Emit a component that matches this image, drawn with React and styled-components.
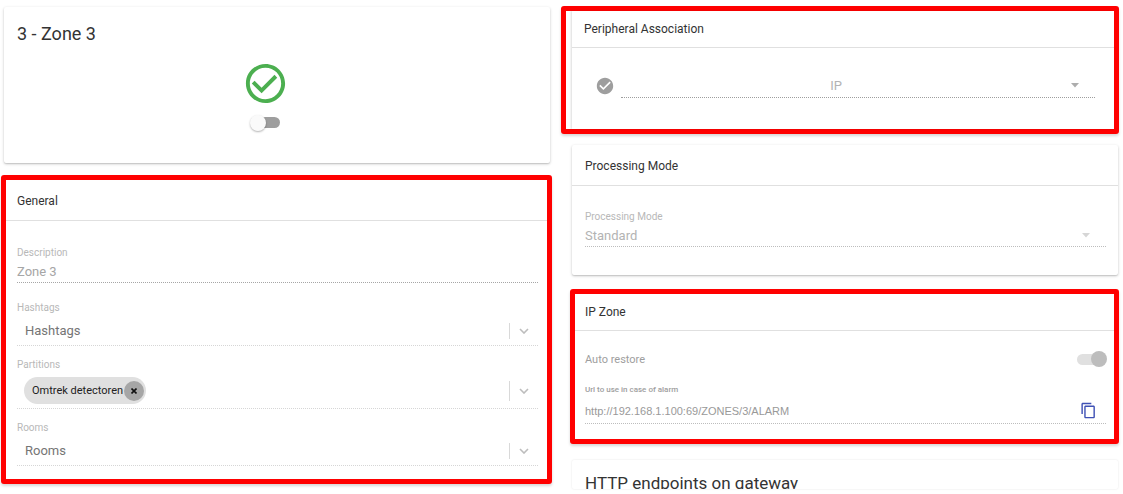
import React, { useState } from "react";
import styled, { createGlobalStyle } from "styled-components";

const GlobalStyle = createGlobalStyle`
  * {
    box-sizing: border-box;
  }
  body {
    margin: 0;
    background: #fff;
    color: #333;
    font-family: Roboto, "Liberation Sans", sans-serif;
    font-size: 13px;
  }
  button, input, select {
    font-family: inherit;
    margin: 0;
  }
`;

const StyledPage = styled.main`
  display: grid;
  grid-template-columns: minmax(0, 551fr) minmax(0, 558fr);
  column-gap: 9px;
  height: 100vh;
  padding: 6px 4px 5px 1px;
  overflow: hidden;
`;

const StyledColumn = styled.div`
  display: flex;
  flex-direction: column;
  min-height: 0;
`;

const StyledCard = styled.section`
  flex: none;
  background: #fff;
  border-radius: 2px;
  box-shadow: 0 1px 3px rgba(0, 0, 0, 0.22), 0 1px 1px rgba(0, 0, 0, 0.08);
`;

const StyledZoneCard = styled(StyledCard)`
  margin: 1px 2px 12px 3px;
  padding: 16px 36px 35px 13px;
`;

const StyledProcessingCard = styled(StyledCard)`
  margin: 11px 1px 14px 11px;
`;

const StyledEndpointsCard = styled(StyledCard)`
  flex: 1;
  min-height: 0;
  margin: 16px 1px 0 11px;
  padding: 12px 13px 0;
  overflow: hidden;
  box-shadow: 0 0 2px rgba(0, 0, 0, 0.12);
`;

const StyledFrame = styled.section`
  flex: none;
  margin-left: ${({ $indent }) => $indent || 0}px;
  border: 5px solid #f00;
  border-radius: 3px;
  background: #fff;
  box-shadow: 0 2px 3px rgba(0, 0, 0, 0.16);
`;

const StyledInset = styled.div`
  margin-left: 6px;
  box-shadow: -1px 0 2px rgba(0, 0, 0, 0.14);
`;

const StyledTitle = styled.h1`
  margin: 0;
  color: #333;
  font-size: ${({ $small }) => ($small ? 17 : 18)}px;
  font-weight: 400;
  line-height: 22px;
`;

const StyledHeader = styled.h2`
  display: flex;
  align-items: center;
  height: ${({ $compact }) => ($compact ? 37 : 41)}px;
  margin: 0;
  padding: ${({ $compact }) => ($compact ? 0 : 2)}px ${({ $pad }) => $pad}px 0;
  border-bottom: 1px solid #e0e0e0;
  color: #333;
  font-size: 12px;
  font-weight: 400;
`;

const StyledZoneStatus = styled.div`
  display: flex;
  flex-direction: column;
  align-items: center;
  gap: 10px;
  margin-top: 15px;
`;

const StyledGeneralBody = styled.div`
  display: flex;
  flex-direction: column;
  gap: 13px;
  padding: 26px 9px 13px 11px;
`;

const StyledField = styled.div`
  margin-bottom: ${({ $spaced }) => ($spaced ? 6 : 0)}px;
`;

const StyledLabel = styled.label`
  display: block;
  color: #b8b8b8;
  font-size: 10px;
  line-height: 12px;
`;

const StyledUrlLabel = styled(StyledLabel)`
  color: #9e9e9e;
  font-size: 8px;
  font-weight: 500;
`;

const StyledControl = styled.div`
  display: flex;
  align-items: center;
  height: ${({ $height }) => $height}px;
  padding-top: 2px;
  border-bottom: 1px dotted ${({ $line }) => $line || "#c8c8c8"};
`;

const StyledPeripheralControl = styled(StyledControl)`
  flex: 1;
  padding-top: 0;
`;

const StyledInput = styled.input`
  flex: 1;
  min-width: 0;
  padding: 0;
  border: 0;
  outline: 0;
  background: transparent;
  color: #a6a6a6;
  font-size: 13px;
`;

const StyledUrlInput = styled(StyledInput)`
  color: #999;
  font-family: "Liberation Sans", Arial, sans-serif;
  font-size: 11px;
`;

const StyledSelect = styled.select`
  flex: 1;
  min-width: 0;
  height: 20px;
  padding: 0 4px 0 ${({ $pad }) => $pad || 0}px;
  border: 0;
  outline: 0;
  appearance: none;
  background: transparent;
  color: ${({ $color }) => $color || "#757575"};
  font-size: 13px;
  text-align-last: ${({ $center }) => ($center ? "center" : "left")};
`;

const StyledIndicator = styled.span`
  display: flex;
  align-items: center;
  justify-content: center;
  width: 29px;
  height: ${({ $tall }) => ($tall ? 20 : 16)}px;
  border-left: 1px solid #d9d9d9;
`;

const StyledCaret = styled.span`
  display: flex;
  justify-content: center;
  width: 40px;
  color: ${({ $color }) => $color};
`;

const StyledChip = styled.span`
  display: flex;
  align-items: center;
  gap: 1px;
  height: 27px;
  margin-left: 7px;
  padding: 0 2px 0 8px;
  border-radius: 14px;
  background: #e0e0e0;
  color: #222;
  font-size: 11px;
`;

const StyledRemove = styled.button`
  display: flex;
  align-items: center;
  justify-content: center;
  width: 20px;
  height: 20px;
  padding: 0;
  border: 0;
  border-radius: 50%;
  background: #a6a6a6;
  cursor: pointer;
`;

const StyledSwitch = styled.input`
  appearance: none;
  display: flex;
  align-items: center;
  width: 29px;
  height: 11px;
  border-radius: 6px;
  background: #9e9e9e;
  &::before {
    content: "";
    flex: none;
    width: 16px;
    height: 16px;
    margin: 0 -1px;
    border-radius: 50%;
    background: #fafafa;
    box-shadow: 0 1px 2px rgba(0, 0, 0, 0.3);
  }
  &:checked {
    background: #e0e0e0;
  }
  &:checked::before {
    margin-left: auto;
    background: #bdbdbd;
    box-shadow: none;
  }
`;

const StyledPeripheralRow = styled.div`
  display: flex;
  align-items: center;
  gap: 7px;
  padding: 25px 19px 31px 24px;
`;

const StyledProcessingBody = styled.div`
  padding: 25px 12px 28px 13px;
`;

const StyledIpBody = styled.div`
  padding: 19px 8px 15px 10px;
`;

const StyledSwitchRow = styled.div`
  display: flex;
  align-items: center;
  justify-content: space-between;
  height: 18px;
  margin-bottom: 16px;
  color: #9e9e9e;
  font-size: 11px;
`;

const StyledCopyButton = styled.button`
  display: flex;
  justify-content: center;
  width: 36px;
  padding: 0;
  border: 0;
  background: transparent;
  color: #3f51b5;
  cursor: pointer;
`;

function Chevron() {
  return (
    <svg width="10" height="6" viewBox="0 0 10 6" fill="none" stroke="#bdbdbd" strokeWidth="1.6">
      <path d="M1 1l4 4 4-4" />
    </svg>
  );
}

function Caret({ color }) {
  return (
    <StyledCaret $color={color}>
      <svg width="8" height="5" viewBox="0 0 8 5" fill="currentColor">
        <path d="M0 0h8L4 4.5z" />
      </svg>
    </StyledCaret>
  );
}

function TagSelect({ id, label, placeholder, height, children }) {
  return (
    <StyledField>
      <StyledLabel htmlFor={id}>{label}</StyledLabel>
      <StyledControl $height={height} $line="#d6d6d6">
        {children}
        <StyledSelect id={id} $pad={8}>
          <option>{placeholder}</option>
        </StyledSelect>
        <StyledIndicator $tall={!placeholder}>
          <Chevron />
        </StyledIndicator>
      </StyledControl>
    </StyledField>
  );
}

function ZoneCard() {
  const [active, setActive] = useState(false);

  return (
    <StyledZoneCard>
      <StyledTitle>3 - Zone 3</StyledTitle>
      <StyledZoneStatus>
        <svg width="47" height="47" viewBox="0 0 24 24" fill="#4caf50">
          <path d="M16.59 7.58L10 14.17l-3.59-3.58L5 12l5 5 8-8zM12 2C6.48 2 2 6.48 2 12s4.48 10 10 10 10-4.48 10-10S17.52 2 12 2zm0 18c-4.42 0-8-3.58-8-8s3.58-8 8-8 8 3.58 8 8-3.58 8-8 8z" />
        </svg>
        <StyledSwitch
          type="checkbox"
          aria-label="Active"
          checked={active}
          onChange={e => setActive(e.target.checked)}
        />
      </StyledZoneStatus>
    </StyledZoneCard>
  );
}

function General() {
  return (
    <StyledFrame>
      <StyledHeader $pad={11}>General</StyledHeader>
      <StyledGeneralBody>
        <StyledField $spaced>
          <StyledLabel htmlFor="description">Description</StyledLabel>
          <StyledControl $height={24} $line="#a6a6a6">
            <StyledInput id="description" defaultValue="Zone 3" />
          </StyledControl>
        </StyledField>
        <TagSelect id="hashtags" label="Hashtags" placeholder="Hashtags" height={32} />
        <TagSelect id="partitions" label="Partitions" placeholder="" height={38}>
          <StyledChip>
            Omtrek detectoren
            <StyledRemove aria-label="Remove">
              <svg width="6" height="6" viewBox="0 0 6 6" stroke="#111" strokeWidth="1.6">
                <path d="M.5.5l5 5M5.5.5l-5 5" />
              </svg>
            </StyledRemove>
          </StyledChip>
        </TagSelect>
        <TagSelect id="rooms" label="Rooms" placeholder="Rooms" height={32} />
      </StyledGeneralBody>
    </StyledFrame>
  );
}

function Peripheral() {
  return (
    <StyledFrame>
      <StyledInset>
        <StyledHeader $compact $pad={12}>Peripheral Association</StyledHeader>
        <StyledPeripheralRow>
          <svg width="18" height="18" viewBox="1 1 22 22" fill="#9e9e9e">
            <path d="M12 2C6.48 2 2 6.48 2 12s4.48 10 10 10 10-4.48 10-10S17.52 2 12 2zm-2 15l-5-5 1.41-1.41L10 14.17l7.59-7.59L19 8l-9 9z" />
          </svg>
          <StyledPeripheralControl $height={25} $line="#9e9e9e">
            <StyledSelect aria-label="Peripheral" $center $color="#b3b3b3">
              <option>IP</option>
            </StyledSelect>
            <Caret color="#adadad" />
          </StyledPeripheralControl>
        </StyledPeripheralRow>
      </StyledInset>
    </StyledFrame>
  );
}

function Processing() {
  return (
    <StyledProcessingCard>
      <StyledHeader $pad={13}>Processing Mode</StyledHeader>
      <StyledProcessingBody>
        <StyledLabel htmlFor="mode">Processing Mode</StyledLabel>
        <StyledControl $height={24} $line="#bdbdbd">
          <StyledSelect id="mode" $color="#b3b3b3">
            <option>Standard</option>
          </StyledSelect>
          <Caret color="#d6d6d6" />
        </StyledControl>
      </StyledProcessingBody>
    </StyledProcessingCard>
  );
}

function IpZone() {
  const [restore, setRestore] = useState(true);

  return (
    <StyledFrame $indent={9}>
      <StyledHeader $compact $pad={10}>IP Zone</StyledHeader>
      <StyledIpBody>
        <StyledSwitchRow>
          <label htmlFor="restore">Auto restore</label>
          <StyledSwitch
            id="restore"
            type="checkbox"
            checked={restore}
            onChange={e => setRestore(e.target.checked)}
          />
        </StyledSwitchRow>
        <StyledUrlLabel htmlFor="url">Url to use in case of alarm</StyledUrlLabel>
        <StyledControl $height={28} $line="#bdbdbd">
          <StyledUrlInput id="url" readOnly value="http://192.168.1.100:69/ZONES/3/ALARM" />
          <StyledCopyButton aria-label="Copy url">
            <svg width="17" height="17" viewBox="0 0 24 24" fill="currentColor">
              <path d="M16 1H4c-1.1 0-2 .9-2 2v14h2V3h12V1zm3 4H8c-1.1 0-2 .9-2 2v14c0 1.1.9 2 2 2h11c1.1 0 2-.9 2-2V7c0-1.1-.9-2-2-2zm0 16H8V7h11v14z" />
            </svg>
          </StyledCopyButton>
        </StyledControl>
      </StyledIpBody>
    </StyledFrame>
  );
}

function App() {
  return (
    <>
      <GlobalStyle />
      <StyledPage>
        <StyledColumn>
          <ZoneCard />
          <General />
        </StyledColumn>
        <StyledColumn>
          <Peripheral />
          <Processing />
          <IpZone />
          <StyledEndpointsCard>
            <StyledTitle as="h2" $small>HTTP endpoints on gateway</StyledTitle>
          </StyledEndpointsCard>
        </StyledColumn>
      </StyledPage>
    </>
  );
}

export default App;
